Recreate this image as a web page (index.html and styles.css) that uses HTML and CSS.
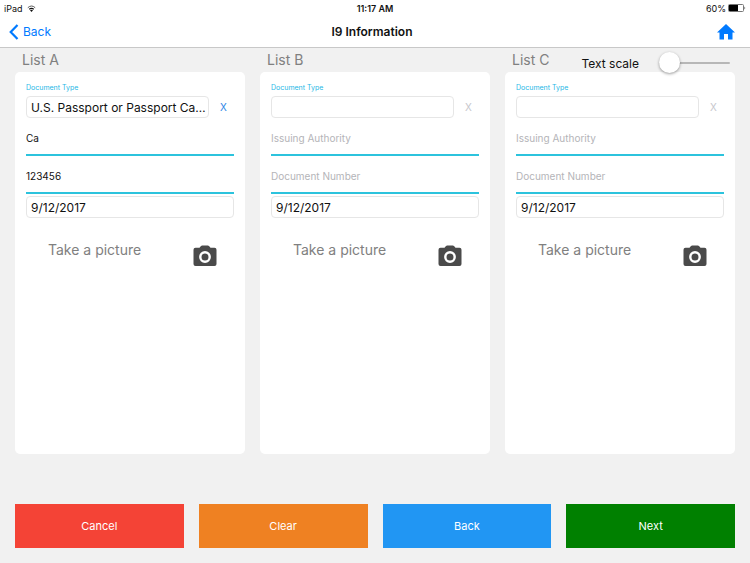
FILE: index.html
```html
<!DOCTYPE html>
<html lang="en">
<head>
  <meta charset="UTF-8">
  <title>I9 Information</title>
  <meta name="viewport" content="width=device-width, initial-scale=1.0">
  <link rel="stylesheet" href="styles.css">
</head>
<body>
  <svg class="symbols" aria-hidden="true">
    <symbol id="camera" viewBox="0 0 24 22">
      <path fill="#4a4a4a" d="M8 1 Q8.500 0.500 9.200 0.500 H14.800 Q15.500 0.500 16 1 L17.500 2.800 H21.500 Q23.500 2.800 23.500 4.800 V19 Q23.500 21 21.500 21 H2.500 Q0.500 21 0.500 19 V4.800 Q0.500 2.800 2.500 2.800 H6.500 Z"/>
      <circle cx="12" cy="12" r="4.700" fill="#4a4a4a" stroke="#fff" stroke-width="2.400"/>
    </symbol>
  </svg>

  <header class="topbar">
    <div class="status">
      <div class="status-left">
        <span>iPad</span>
        <svg width="9" height="7" viewBox="0 0 9 7">
          <path d="M0.800 2.700 Q4.500 -0.700 8.200 2.700" fill="none" stroke="#555" stroke-width="1"/>
          <path d="M2.200 4.200 Q4.500 2.400 6.800 4.200" fill="none" stroke="#111" stroke-width="1.200"/>
          <path d="M3 5.300 Q4.500 4.200 6 5.300 L4.500 6.900 Z" fill="#111"/>
        </svg>
      </div>
      <span class="status-time">11:17 AM</span>
      <div class="status-right">
        <span>60%</span>
        <svg width="18" height="8" viewBox="0 0 18 8">
          <rect x="0.500" y="0.500" width="15" height="7" rx="1" fill="#fff" stroke="#777"/>
          <rect x="1" y="1" width="9" height="6" fill="#000"/>
          <path d="M16.500 2.500 Q18 4 16.500 5.500 Z" fill="#333"/>
        </svg>
      </div>
    </div>
    <nav class="navbar">
      <a class="nav-back" href="#">
        <svg width="10" height="16" viewBox="0 0 10 16">
          <path d="M8.500 1 L1.700 8 L8.500 15" fill="none" stroke="#007aff" stroke-width="2.200"/>
        </svg>
        Back
      </a>
      <h1>I9 Information</h1>
      <a class="nav-home" href="#" aria-label="Home">
        <svg width="18" height="16" viewBox="0 0 18 16">
          <path fill="#007aff" d="M9 0 L18 8.500 H15.500 V15.500 H11 V10 H7 V15.500 H2.500 V8.500 H0 Z"/>
        </svg>
      </a>
    </nav>
  </header>

  <main class="content">
    <div class="text-scale">
      <label for="scale">Text scale</label>
      <input type="range" id="scale" min="0" max="100" value="0">
    </div>

    <div class="lists">
      <section class="list">
        <h2>List A</h2>
        <div class="card">
          <label class="type-label" for="type_a">Document Type</label>
          <div class="type-row">
            <select class="box" id="type_a">
              <option>U.S. Passport or Passport Card</option>
            </select>
            <button type="button" class="remove">X</button>
          </div>
          <input class="line" type="text" aria-label="Issuing Authority" placeholder="Issuing Authority" value="Ca">
          <input class="line" type="text" aria-label="Document Number" placeholder="Document Number" value="123456">
          <input class="box date" type="text" aria-label="Date" value="9/12/2017">
          <div class="picture">
            <span>Take a picture</span>
            <button type="button" aria-label="Camera"><svg width="24" height="22"><use href="#camera"/></svg></button>
          </div>
        </div>
      </section>

      <section class="list">
        <h2>List B</h2>
        <div class="card">
          <label class="type-label" for="type_b">Document Type</label>
          <div class="type-row">
            <select class="box" id="type_b">
              <option></option>
            </select>
            <button type="button" class="remove" disabled>X</button>
          </div>
          <input class="line" type="text" aria-label="Issuing Authority" placeholder="Issuing Authority">
          <input class="line" type="text" aria-label="Document Number" placeholder="Document Number">
          <input class="box date" type="text" aria-label="Date" value="9/12/2017">
          <div class="picture">
            <span>Take a picture</span>
            <button type="button" aria-label="Camera"><svg width="24" height="22"><use href="#camera"/></svg></button>
          </div>
        </div>
      </section>

      <section class="list">
        <h2>List C</h2>
        <div class="card">
          <label class="type-label" for="type_c">Document Type</label>
          <div class="type-row">
            <select class="box" id="type_c">
              <option></option>
            </select>
            <button type="button" class="remove" disabled>X</button>
          </div>
          <input class="line" type="text" aria-label="Issuing Authority" placeholder="Issuing Authority">
          <input class="line" type="text" aria-label="Document Number" placeholder="Document Number">
          <input class="box date" type="text" aria-label="Date" value="9/12/2017">
          <div class="picture">
            <span>Take a picture</span>
            <button type="button" aria-label="Camera"><svg width="24" height="22"><use href="#camera"/></svg></button>
          </div>
        </div>
      </section>
    </div>

    <div class="actions">
      <button type="button" class="cancel">Cancel</button>
      <button type="button" class="clear">Clear</button>
      <button type="button" class="back">Back</button>
      <button type="button" class="next">Next</button>
    </div>
  </main>
</body>
</html>
```
FILE: styles.css
```css
* {
  box-sizing: border-box;
}
body {
  font-family: Inter, Roboto, sans-serif;
  background: #f1f1f1;
  color: #111;
  margin: 0;
  min-height: 100vh;
  display: flex;
  flex-direction: column;
}
button, input, select {
  font-family: inherit;
  margin: 0;
  padding: 0;
  border: none;
  border-radius: 0;
  background: none;
}
svg {
  display: block;
}
.symbols {
  display: none;
}

/* status bar and title */
.topbar {
  background: white;
  border-bottom: 1px solid #c8c8c8;
}
.status {
  display: grid;
  grid-template-columns: 1fr auto 1fr;
  align-items: center;
  height: 16px;
  padding: 0 4px;
  font-size: 9px;
}
.status-left, .status-right {
  display: flex;
  align-items: center;
  gap: 4px;
}
.status-right {
  justify-content: flex-end;
  gap: 2px;
}
.status-time {
  font-weight: 600;
}
.navbar {
  display: grid;
  grid-template-columns: 1fr auto 1fr;
  align-items: center;
  height: 31px;
  padding: 0 15px 0 9px;
}
.navbar h1 {
  margin: 0;
  font-size: 12px;
  font-weight: 600;
}
.nav-back {
  display: flex;
  align-items: center;
  gap: 4px;
  color: #007aff;
  font-size: 12px;
  text-decoration: none;
}
.nav-home {
  justify-self: end;
}

/* lists */
.content {
  position: relative;
  flex: 1;
  display: flex;
  flex-direction: column;
  padding: 0 15px 15px;
}
.lists {
  flex: 1;
  display: grid;
  grid-template-columns: repeat(3, 1fr);
  gap: 15px;
}
.list {
  display: flex;
  flex-direction: column;
  min-width: 0;
}
.list h2 {
  margin: 0;
  padding-left: 7px;
  font-size: 14px;
  font-weight: normal;
  line-height: 24px;
  color: #808080;
}
.card {
  flex: 1;
  display: flex;
  flex-direction: column;
  padding: 11px;
  background: white;
  border-radius: 5px;
}
.type-label {
  font-size: 7px;
  line-height: 10px;
  margin-bottom: 3px;
  color: #1fb8e6;
}
.type-row {
  display: flex;
}
.box {
  height: 22px;
  padding: 0 2px 0 4px;
  border: 1px solid #e6e6e6;
  border-radius: 4px;
  font-size: 12px;
  color: #111;
}
.type-row select {
  flex: 1;
  min-width: 0;
  appearance: none;
  text-overflow: ellipsis;
}
.remove {
  width: 25px;
  padding-left: 4px;
  font-size: 10px;
  color: #2e86e6;
}
.remove:disabled {
  color: #c7c7cd;
}
.line {
  height: 38px;
  padding-top: 4px;
  border-bottom: 2px solid #2cc3dd;
  font-size: 10px;
  color: #111;
}
.line::placeholder {
  color: #b4b4b8;
}
.date {
  margin-top: 2px;
}
.picture {
  display: flex;
  justify-content: space-between;
  align-items: flex-start;
  padding: 23px 17px 0 22px;
  font-size: 14px;
  line-height: 17px;
  color: #808080;
}
.picture button {
  margin-top: 4px;
}

/* floats over the last list title */
.text-scale {
  position: absolute;
  top: 4px;
  right: 20px;
  display: flex;
  align-items: center;
  gap: 20px;
  font-size: 12px;
}
.text-scale input {
  appearance: none;
  width: 71px;
  height: 22px;
}
.text-scale input::-webkit-slider-runnable-track {
  height: 2px;
  border-radius: 1px;
  background: #b7b7b7;
}
.text-scale input::-webkit-slider-thumb {
  appearance: none;
  width: 21px;
  height: 21px;
  margin-top: -10px;
  border-radius: 50%;
  background: white;
  box-shadow: 0 1px 3px rgba(0,0,0,0.4);
}

/* bottom buttons */
.actions {
  display: grid;
  grid-template-columns: repeat(4, 1fr);
  gap: 15px;
  margin-top: 50px;
}
.actions button {
  height: 44px;
  font-size: 11px;
  color: white;
}
.actions .cancel {
  background: #f44336;
}
.actions .clear {
  background: #ef8122;
}
.actions .back {
  background: #2196f3;
}
.actions .next {
  background: #008000;
}
```
